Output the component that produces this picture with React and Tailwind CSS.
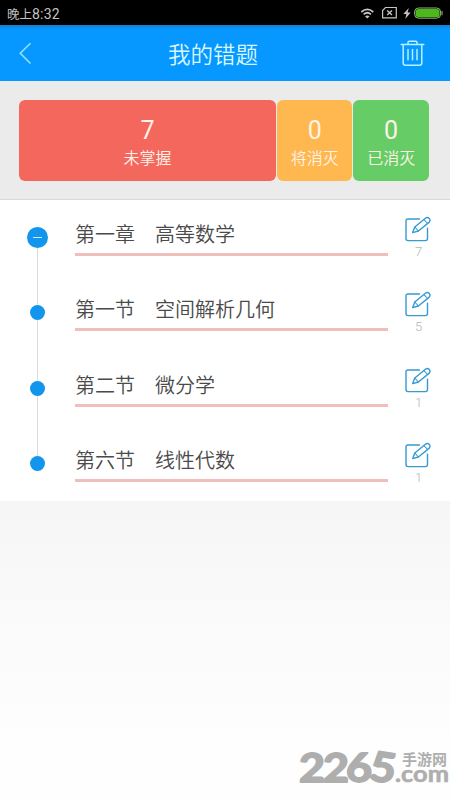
const stats = [
  { count: 7, label: "未掌握", className: "w-[257.5px] bg-[#f4675d]" },
  { count: 0, label: "将消灭", className: "w-[75.3px] bg-[#ffb74f]" },
  { count: 0, label: "已消灭", className: "w-[75.3px] bg-[#66cd66]" },
]

const chapters = [
  { index: "第一章", title: "高等数学", count: 7, root: true },
  { index: "第一节", title: "空间解析几何", count: 5 },
  { index: "第二节", title: "微分学", count: 1 },
  { index: "第六节", title: "线性代数", count: 1 },
]

function StatusBar() {
  return (
    <div className="flex h-[25px] items-center justify-between bg-black pl-[7px] pr-[6px] text-[#c4c4c4]">
      <span className="pt-[2px] text-[12.5px] leading-none">
        晚上<span className="font-[Roboto] text-[14px] tracking-[0.2px]">8:32</span>
      </span>
      <svg width="84" height="16" viewBox="0 0 84 16" fill="none" stroke="currentColor">
        <path d="M1.3 7Q7.3 1.8 13.3 7M3.6 9.3Q7.3 6.2 11 9.3" strokeWidth="1.7" />
        <path d="M5 11.2Q7.3 9.6 9.6 11.2L7.3 13.6Z" fill="currentColor" stroke="none" />
        <path d="M25.5 2.5H36.3V12.8H22.6V5.5Z" strokeWidth="1.2" />
        <path d="M27.2 5.5L32 10.1M32 5.5L27.2 10.1" strokeWidth="1.4" />
        <path d="M48.8 3L43.3 9H46.4L45.3 14L50.6 7.6H47.6Z" fill="currentColor" stroke="none" />
        <rect x="54.6" y="3" width="26" height="10.2" rx="4" stroke="#93b87a" />
        <rect x="55.6" y="4" width="24" height="8.2" rx="3" fill="#4db81c" stroke="none" />
        <path d="M82 6V10.3" stroke="#93b87a" />
      </svg>
    </div>
  )
}

function Header() {
  return (
    <header className="flex h-14 items-center bg-linear-to-b from-[#1580d0] to-[#0697ff] to-8% pl-[18px] pr-[25px] text-[#d9f8ff]">
      <svg width="31" height="24" viewBox="0 0 31 24" fill="none" stroke="#8fe5ff" strokeWidth="1.6">
        <path d="M12.5 2.3L2.3 12.3L12.5 22.5" />
      </svg>
      <h1 className="flex-1 pl-[119px] text-[22.5px] leading-none font-[350]">我的错题</h1>
      <svg width="25" height="28" viewBox="0 0 25 28" fill="none" stroke="#b5f3ff" strokeWidth="1.5" strokeLinecap="round" strokeLinejoin="round">
        <path d="M1.2 5.4H23.8M8 5V3.4Q8 2.2 9.2 2.2H15.8Q17 2.2 17 3.4V5" />
        <path d="M3.2 5.6V24Q3.2 26.2 5.4 26.2H19.6Q21.8 26.2 21.8 24V5.6" />
        <path d="M8 10.5V20.7M12.5 10.5V20.7M17 10.5V20.7" />
      </svg>
    </header>
  )
}

function EditIcon() {
  return (
    <svg width="28" height="27" viewBox="0 0 28 27" fill="none" stroke="#369bd2" strokeWidth="1.4" strokeLinejoin="round" strokeLinecap="round">
      <path d="M15.5 3H4Q2 3 2 5V22.6Q2 24.6 4 24.6H21.5Q23.5 24.6 23.5 22.6V12.2" />
      <path d="M8.7 16.6L10.8 11L21.4 2.2Q23.4 .6 25.3 2.4Q26.9 4.5 25 6.4L14.4 15Z" />
      <path d="M10.8 11L14.4 15M20 3.6L23.6 7.5" strokeWidth="1.1" />
    </svg>
  )
}

function ChapterRow({ chapter, first, last }) {
  return (
    <li className="flex h-[75.4px]">
      <div className="flex w-[75px] flex-col items-center">
        <span className={first ? "h-[27px]" : "h-[30px] w-px bg-[#dcdcdc]"} />
        {chapter.root ? (
          <span className="flex h-[21px] w-[21px] items-center justify-center rounded-full bg-[#1295ed]">
            <span className="h-[1.5px] w-[9px] bg-[#c5f2ff]" />
          </span>
        ) : (
          <span className="h-[15px] w-[15px] rounded-full bg-[#1295ed]" />
        )}
        {!last && <span className="w-px flex-1 bg-[#dcdcdc]" />}
      </div>
      <div className="h-[56px] w-[313px] border-b-3 border-[#f0bfbb] pt-[19px] text-[20px] leading-[30px] font-[350] whitespace-nowrap text-[#4a4a4a]">
        {chapter.index}
        <span className="ml-5">{chapter.title}</span>
      </div>
      <div className="flex flex-col items-center pl-4 pt-4">
        <EditIcon />
        <span className="pl-px pt-[2px] font-[Roboto] text-[13px] leading-[13px] font-light text-[#b5b5b5]">{chapter.count}</span>
      </div>
    </li>
  )
}

function Watermark() {
  return (
    <svg className="absolute bottom-0 right-0" width="154" height="76" viewBox="296 724 154 76" fill="#aeaeae" stroke="#aeaeae" strokeLinejoin="round">
      <g fontFamily="Lato, sans-serif" fontWeight="700" fontSize="41" strokeWidth="1.8">
        <text x="299" y="782" textLength="26" lengthAdjust="spacingAndGlyphs">2</text>
        <text x="323" y="782" textLength="26" lengthAdjust="spacingAndGlyphs">2</text>
        <text x="346" y="782" textLength="26" lengthAdjust="spacingAndGlyphs">6</text>
        <text x="370" y="782" textLength="26" lengthAdjust="spacingAndGlyphs" transform="rotate(9 383 768)">5</text>
      </g>
      <text x="402" y="765" fontSize="15" fontWeight="700" textLength="45" stroke="none">手游网</text>
      <text x="395" y="782" fontFamily="Lato, sans-serif" fontSize="23" fontWeight="700" textLength="54" lengthAdjust="spacingAndGlyphs" strokeWidth=".6">.com</text>
    </svg>
  )
}

export default function App() {
  return (
    <div className="relative flex h-[800px] w-[450px] flex-col overflow-hidden bg-[#f5f5f5] font-['Noto_Sans_CJK_SC',sans-serif]">
      <StatusBar />
      <Header />
      <section className="flex h-[119px] gap-px border-b border-[#d9d9d9] bg-[#ebebeb] pl-[18.7px] pt-[19px]">
        {stats.map((stat) => (
          <div key={stat.label} className={`flex h-[81px] flex-col items-center rounded-[6px] pt-[17px] text-[#fff3e8] ${stat.className}`}>
            <span className="font-[Roboto] text-[25px] leading-[28px]">{stat.count}</span>
            <span className="text-[16px] leading-[25px] font-[350]">{stat.label}</span>
          </div>
        ))}
      </section>
      <ul className="h-[301px] overflow-hidden bg-white">
        {chapters.map((chapter, i) => (
          <ChapterRow key={chapter.index} chapter={chapter} first={i === 0} last={i === chapters.length - 1} />
        ))}
      </ul>
      <div className="flex-1 bg-linear-to-b from-[#f6f6f6] to-[#fefefe] to-80%" />
      <Watermark />
    </div>
  )
}
